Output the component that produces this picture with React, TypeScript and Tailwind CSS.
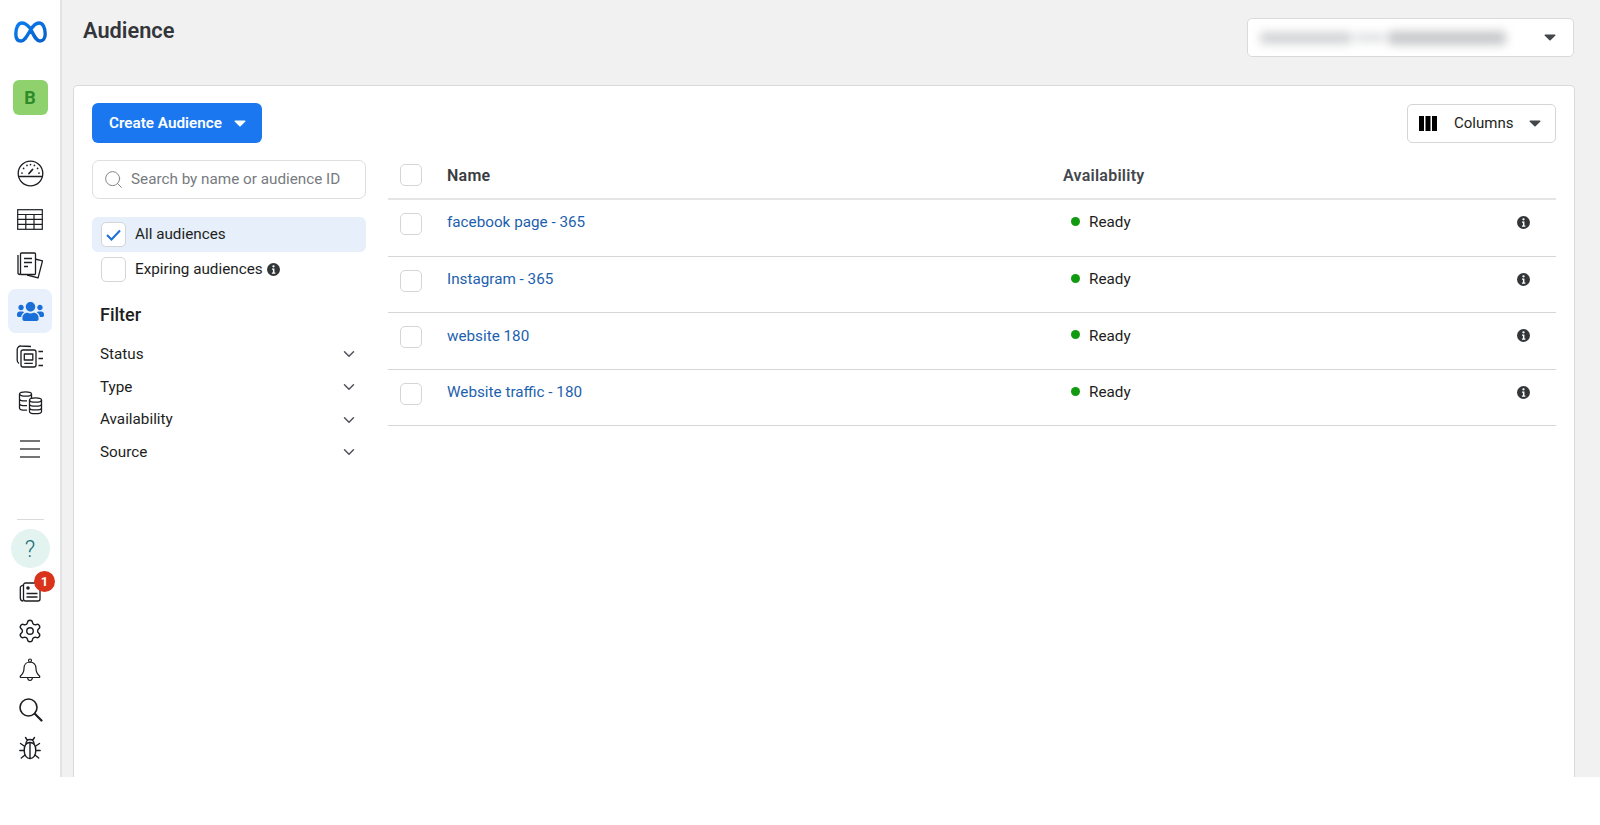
import { ChevronDown, Search, Settings } from "lucide-react";
import { FaUsers } from "react-icons/fa";

const Caret = ({ className = "" }: { className?: string }) => (
  <svg width="12" height="7" viewBox="0 0 12 7" className={className}>
    <path d="M1 0.5h10a.6.6 0 0 1 .4 1L6.6 6.2a.8.8 0 0 1-1.2 0L.6 1.5A.6.6 0 0 1 1 .5z" fill="currentColor" />
  </svg>
);

const Info = ({ size = 13 }: { size?: number }) => (
  <svg width={size} height={size} viewBox="0 0 14 14" className="shrink-0">
    <circle cx="7" cy="7" r="7" fill="#333639" />
    <circle cx="7" cy="3.6" r="1.25" fill="#fff" />
    <path d="M5.4 6h2.6v4.2h1v1.3H5.3v-1.3h1.1V7.3h-1z" fill="#fff" />
  </svg>
);

const Box = ({ className = "" }: { className?: string }) => (
  <span className={`block rounded-[5px] border border-[#d3d5d8] bg-white shrink-0 ${className}`} />
);

const MetaLogo = () => (
  <svg width="33" height="22" viewBox="0 0 33 22">
    <defs>
      <linearGradient id="meta" x1="0" y1="0" x2="1" y2="1">
        <stop offset="0" stopColor="#0a7cf0" />
        <stop offset="1" stopColor="#0762c8" />
      </linearGradient>
    </defs>
    <path
      d="M16 7C13 3.5 10.5 2 8 2 4 2 1.8 7 1.8 13 1.8 17.5 3.8 20 7 20c3.5 0 6-5 9.5-11C19.5 4 22 2 25 2c4 0 6.200 5 6.200 11 0 4.500-2.200 7-5.200 7-4 0-6-5.500-10-13z"
      fill="none"
      stroke="url(#meta)"
      strokeWidth="3.4"
      strokeLinejoin="round"
    />
  </svg>
);

const Gauge = () => (
  <svg width="27" height="27" viewBox="0 0 27 27" fill="none" stroke="#1c1e21" strokeWidth="1.3" strokeLinecap="round">
    <circle cx="13.5" cy="13.5" r="12.3" />
    <path d="M1.6 16.5h23.8" />
    <path d="M12 13.5l3.5-4" strokeWidth="1.8" />
    <path d="M5 13v.1M6.6 8.4v.1M10 5.4v.1M13.5 4.5v.1M17.4 5.4v.1M22 13v.1M20.6 8.4v.1" strokeWidth="1.7" />
  </svg>
);

const TableIcon = () => (
  <svg width="26" height="21" viewBox="0 0 26 21" fill="none" stroke="#1c1e21" strokeWidth="1.2">
    <rect x="0.7" y="0.7" width="24.6" height="19.6" />
    <path d="M.7 5.5h24.6M.7 10.3h24.6M.7 15.3h24.6M8.8 5.5v14.8M17 5.5v14.8" />
  </svg>
);

const Pages = () => (
  <svg width="27" height="27" viewBox="0 0 27 27" fill="none" stroke="#1c1e21" strokeWidth="1.3" strokeLinejoin="round">
    <path d="M18 7l7.5 1.8-4.4 17-11-2.8" />
    <rect x="3.5" y="1" width="15" height="21.5" rx="1" fill="#fff" />
    <path d="M1 3v18.5a3 3 0 0 0 2.5 1" />
    <path d="M7 6.5h8M7 10.5h8M7 14.5h4" />
  </svg>
);

const Creative = () => (
  <svg width="28" height="24" viewBox="0 0 28 24" fill="none" stroke="#1c1e21" strokeWidth="1.3" strokeLinejoin="round">
    <path d="M15 1.5L5 1A3.5 3.5 0 0 0 1.2 4.5v10.5a4 4 0 0 0 1.8 3.5" />
    <rect x="5" y="5" width="15" height="17" rx="2" fill="#fff" />
    <rect x="8.3" y="9" width="8.5" height="6" />
    <path d="M8.3 18.3h8.5M22.5 6.5h4.500M22.5 13.5h4.500M22.5 20.5h4.500" />
  </svg>
);

const Database = () => (
  <svg width="25" height="24" viewBox="0 0 25 24" fill="none" stroke="#1c1e21" strokeWidth="1.3">
    <ellipse cx="7.5" cy="3" rx="6" ry="2.2" />
    <path d="M1.5 3v14c0 1.3 2.7 2.2 6 2.2.5 0 1 0 1.5-.1M1.5 7.7c0 1.2 2.7 2.2 6 2.2.6 0 1-.1 1.5-.1M1.5 12.4c0 1.2 2.7 2.2 6 2.2h1.5M13.5 3v5" />
    <ellipse cx="17.5" cy="9" rx="6" ry="2.2" fill="#fff" />
    <path d="M11.5 9v11.5c0 1.3 2.7 2.2 6 2.2s6-.9 6-2.2V9M11.5 12.9c0 1.2 2.7 2.2 6 2.2s6-1 6-2.2M11.5 16.7c0 1.2 2.7 2.2 6 2.2s6-1 6-2.2" />
  </svg>
);

const MenuIcon = () => (
  <svg width="20" height="18" viewBox="0 0 20 18" stroke="#44474a" strokeWidth="1.3">
    <path d="M0 1h20M0 9h20M0 17h20" />
  </svg>
);

const News = () => (
  <svg width="22" height="20" viewBox="0 0 22 20" fill="none" stroke="#1c1e21" strokeWidth="1.3" strokeLinejoin="round">
    <path d="M4.5 3L2.5 3.8A2 2 0 0 0 1.3 6v10a3 3 0 0 0 3 3" />
    <rect x="4.5" y="1" width="16.5" height="18" rx="2" fill="#fff" />
    <circle cx="9" cy="6" r="1.8" fill="#1c1e21" stroke="none" />
    <path d="M7.5 11.5h11M7.5 15h11" />
  </svg>
);

const BellIcon = () => (
  <svg width="22" height="24" viewBox="0 0 22 24" fill="none" stroke="#1c1e21" strokeWidth="1.2" strokeLinejoin="round">
    <circle cx="11" cy="2.5" r="1.5" />
    <path d="M11 4c-3.800 0-6 2.800-6 6.500 0 3.800-1.300 5.500-3.500 7.500-.6.6-.3 1.500.6 1.500h17.800c.9 0 1.200-.9.600-1.500-2.200-2-3.500-3.700-3.500-7.500C17 6.800 14.800 4 11 4z" />
    <path d="M8.500 19.500c.3 2 1.300 3 2.500 3s2.200-1 2.500-3" />
  </svg>
);

const SearchIcon = () => (
  <svg width="25" height="25" viewBox="0 0 25 25" fill="none" stroke="#1c1e21" strokeLinecap="round">
    <circle cx="10.5" cy="10.5" r="8.5" strokeWidth="1.6" />
    <path d="M16.8 16.8l6.700 6.700" strokeWidth="2.2" />
  </svg>
);

const Bug = () => (
  <svg width="22" height="24" viewBox="0 0 22 24" fill="none" stroke="#1c1e21" strokeWidth="1.4" strokeLinecap="round">
    <path d="M11 6.5c-4 0-5.800 3.500-5.800 8 0 4.800 2.500 8 5.800 8s5.800-3.200 5.800-8c0-4.500-1.800-8-5.800-8z" />
    <path d="M11 6.5v16M7 7.500a4 4 0 0 1 8 0M6.500 1.500l2 3M15.500 1.500l-2 3M5.200 10L1.500 7.500M16.800 10l3.700-2.500M5.200 14.500H.8M16.800 14.500h4.400M6 19l-3.700 3M16 19l3.700 3" />
  </svg>
);

const navIcons = [
  { key: "gauge", icon: <Gauge /> },
  { key: "table", icon: <TableIcon /> },
  { key: "pages", icon: <Pages /> },
  { key: "people", icon: <FaUsers className="text-[#1a6fd8]" size={27} />, active: true },
  { key: "creative", icon: <Creative /> },
  { key: "db", icon: <Database /> },
  { key: "menu", icon: <MenuIcon /> },
];

const Sidebar = () => (
  <aside className="w-[62px] shrink-0 bg-white border-r-[2px] border-[#e2e3e5] flex flex-col items-center">
    <div className="h-[64px] flex items-center justify-center pl-[1px]">
      <MetaLogo />
    </div>
    <div className="mt-[16px] w-[35px] h-[35px] rounded-[6px] bg-[#8fd16d] flex items-center justify-center font-bold text-[18px] text-[#2f8a2a]">
      B
    </div>
    <nav className="mt-[35px] w-full flex flex-col items-center">
      {navIcons.map((n) => (
        <div key={n.key} className="h-[46px] w-full flex items-center justify-center">
          <div className={`w-[44px] h-[44px] rounded-[8px] flex items-center justify-center ${n.active ? "bg-[#e7f0fb]" : ""}`}>
            {n.icon}
          </div>
        </div>
      ))}
    </nav>
    <div className="mt-[47px] w-[27px] h-px bg-[#d8dadd]" />
    <div className="mt-[9px] w-[39px] h-[39px] rounded-full bg-[#e3f3ef] flex items-center justify-center pt-[3px] text-[23px] font-light text-[#1d6f7a]">
      ?
    </div>
    <div className="mt-[4px] w-full flex flex-col items-center">
      <div className="relative h-[39px] w-full flex items-center justify-center">
        <News />
        <span className="absolute top-[-1px] left-[34px] w-[21px] h-[21px] rounded-full bg-[#d9341b] text-white text-[13px] font-bold flex items-center justify-center">
          1
        </span>
      </div>
      <div className="h-[39px] flex items-center justify-center">
        <Settings size={26} strokeWidth={1.3} color="#1c1e21" />
      </div>
      <div className="h-[39px] flex items-center justify-center pt-[1px]">
        <BellIcon />
      </div>
      <div className="h-[39px] flex items-center justify-center pt-[2px]">
        <SearchIcon />
      </div>
      <div className="h-[39px] flex items-center justify-center">
        <Bug />
      </div>
    </div>
  </aside>
);

const filters = ["Status", "Type", "Availability", "Source"];
const rows = ["facebook page - 365", "Instagram - 365", "website 180", "Website traffic - 180"];

const FilterPanel = () => (
  <div className="w-[274px] shrink-0">
    <div className="h-[39px] rounded-[7px] border border-[#dcdee1] flex items-center pl-[10px] gap-[7px]">
      <Search size={21} strokeWidth={1.1} color="#7d8186" />
      <span className="text-[15.25px] text-[#777b80]">Search by name or audience ID</span>
    </div>
    <div className="mt-[18px] h-[35px] rounded-[6px] bg-[#e7effb] flex items-center pl-[9px] gap-[9px]">
      <span className="w-[25px] h-[25px] rounded-[5px] border border-[#d3d5d8] bg-white flex items-center justify-center shrink-0">
        <svg width="15" height="12" viewBox="0 0 15 12" fill="none" stroke="#1a6fd8" strokeWidth="2">
          <path d="M1 6l4.5 4.5L14 1.5" />
        </svg>
      </span>
      <span className="text-[15.25px] text-[#1c1e21]">All audiences</span>
    </div>
    <div className="mt-[1px] h-[33px] flex items-center pl-[9px] gap-[9px]">
      <Box className="w-[25px] h-[25px]" />
      <span className="text-[15.25px] text-[#1c1e21]">Expiring audiences</span>
      <span className="-ml-[5px]">
        <Info size={13} />
      </span>
    </div>
    <h2 className="mt-[17px] pl-[8px] text-[18px] leading-[24px] font-medium text-[#1c1e21]">Filter</h2>
    <ul className="mt-[11px] pl-[8px] pr-[8px]">
      {filters.map((f) => (
        <li key={f} className="h-[32.7px] flex items-center justify-between text-[15.25px] text-[#1c1e21]">
          {f}
          <ChevronDown size={18} strokeWidth={2} color="#50545a" />
        </li>
      ))}
    </ul>
  </div>
);

const AudienceTable = () => (
  <div className="flex-1 ml-[22px]">
    <div className="h-[40px] flex items-start border-b-[2px] border-[#e4e5e7]">
      <Box className="w-[22px] h-[22px] ml-[12px] mt-[4px]" />
      <span className="ml-[25px] w-[616px] mt-[5px] text-[16px] leading-[22px] tracking-[0.25px] font-semibold text-[#3a3c40]">Name</span>
      <span className="mt-[5px] text-[16px] leading-[22px] tracking-[0.25px] font-semibold text-[#44474c]">Availability</span>
    </div>
    {rows.map((r) => (
      <div key={r} className="h-[56.6px] flex items-center border-b-[1px] border-[#d5d6d8] pb-[10px]">
        <Box className="w-[22px] h-[22px] ml-[12px] mt-[3px]" />
        <span className="ml-[25px] w-[624px] text-[15.25px] text-[#1d5fae]">{r}</span>
        <span className="w-[9px] h-[9px] rounded-full bg-[#119a10] mb-[2px]" />
        <span className="ml-[9px] text-[15.25px] text-[#1c1e21]">Ready</span>
        <span className="ml-auto mr-[26px]">
          <Info size={13} />
        </span>
      </div>
    ))}
  </div>
);

export default function App() {
  return (
    <div className="w-[1600px] h-[825px] bg-white overflow-hidden font-['Roboto',sans-serif]">
      <div className="h-[777px] flex bg-[#f1f1f1]">
        <Sidebar />
        <main className="flex-1 flex flex-col pl-[11px]">
          <header className="h-[85px] shrink-0 flex items-start justify-between pr-[26px] pt-[18px]">
            <h1 className="ml-[10px] text-[21.75px] leading-[25px] font-semibold text-[#33353a]">Audience</h1>
            <div className="w-[327px] h-[39px] rounded-[5px] border border-[#d8dadc] bg-white flex items-center justify-between pl-[12px] pr-[17px]">
              <div className="flex items-center gap-[3px] blur-[5px]">
                <div className="w-[92px] h-[12px] rounded bg-[#d2d3d5]" />
                <div className="w-[30px] h-[9px] rounded bg-[#dfe0e2]" />
                <div className="w-[118px] h-[14px] rounded bg-[#c8c9cb]" />
              </div>
              <Caret className="text-[#44474a]" />
            </div>
          </header>
          <section className="w-[1502px] flex-1 bg-white border border-b-0 border-[#d8dadc] rounded-t-[5px] pl-[18px] pr-[18px] pt-[17px]">
            <div className="flex items-center justify-between">
              <button className="w-[170px] h-[40px] rounded-[6px] bg-[#1a77f0] text-white text-[15.25px] font-semibold flex items-center pl-[17px] gap-[12px]">
                Create Audience
                <Caret className="text-white" />
              </button>
              <button className="w-[149px] h-[39px] rounded-[5px] border border-[#d3d5d8] bg-white flex items-center pl-[11px] text-[15px] text-[#1c1e21]">
                <svg width="18" height="15" viewBox="0 0 18 15" fill="#000">
                  <rect x="0" y="0" width="5" height="15" />
                  <rect x="6.5" y="0" width="5" height="15" />
                  <rect x="13" y="0" width="5" height="15" />
                </svg>
                <span className="ml-[17px] pt-[1px]">Columns</span>
                <Caret className="ml-[16px] text-[#44474a]" />
              </button>
            </div>
            <div className="flex mt-[17px]">
              <FilterPanel />
              <AudienceTable />
            </div>
          </section>
        </main>
      </div>
    </div>
  );
}
